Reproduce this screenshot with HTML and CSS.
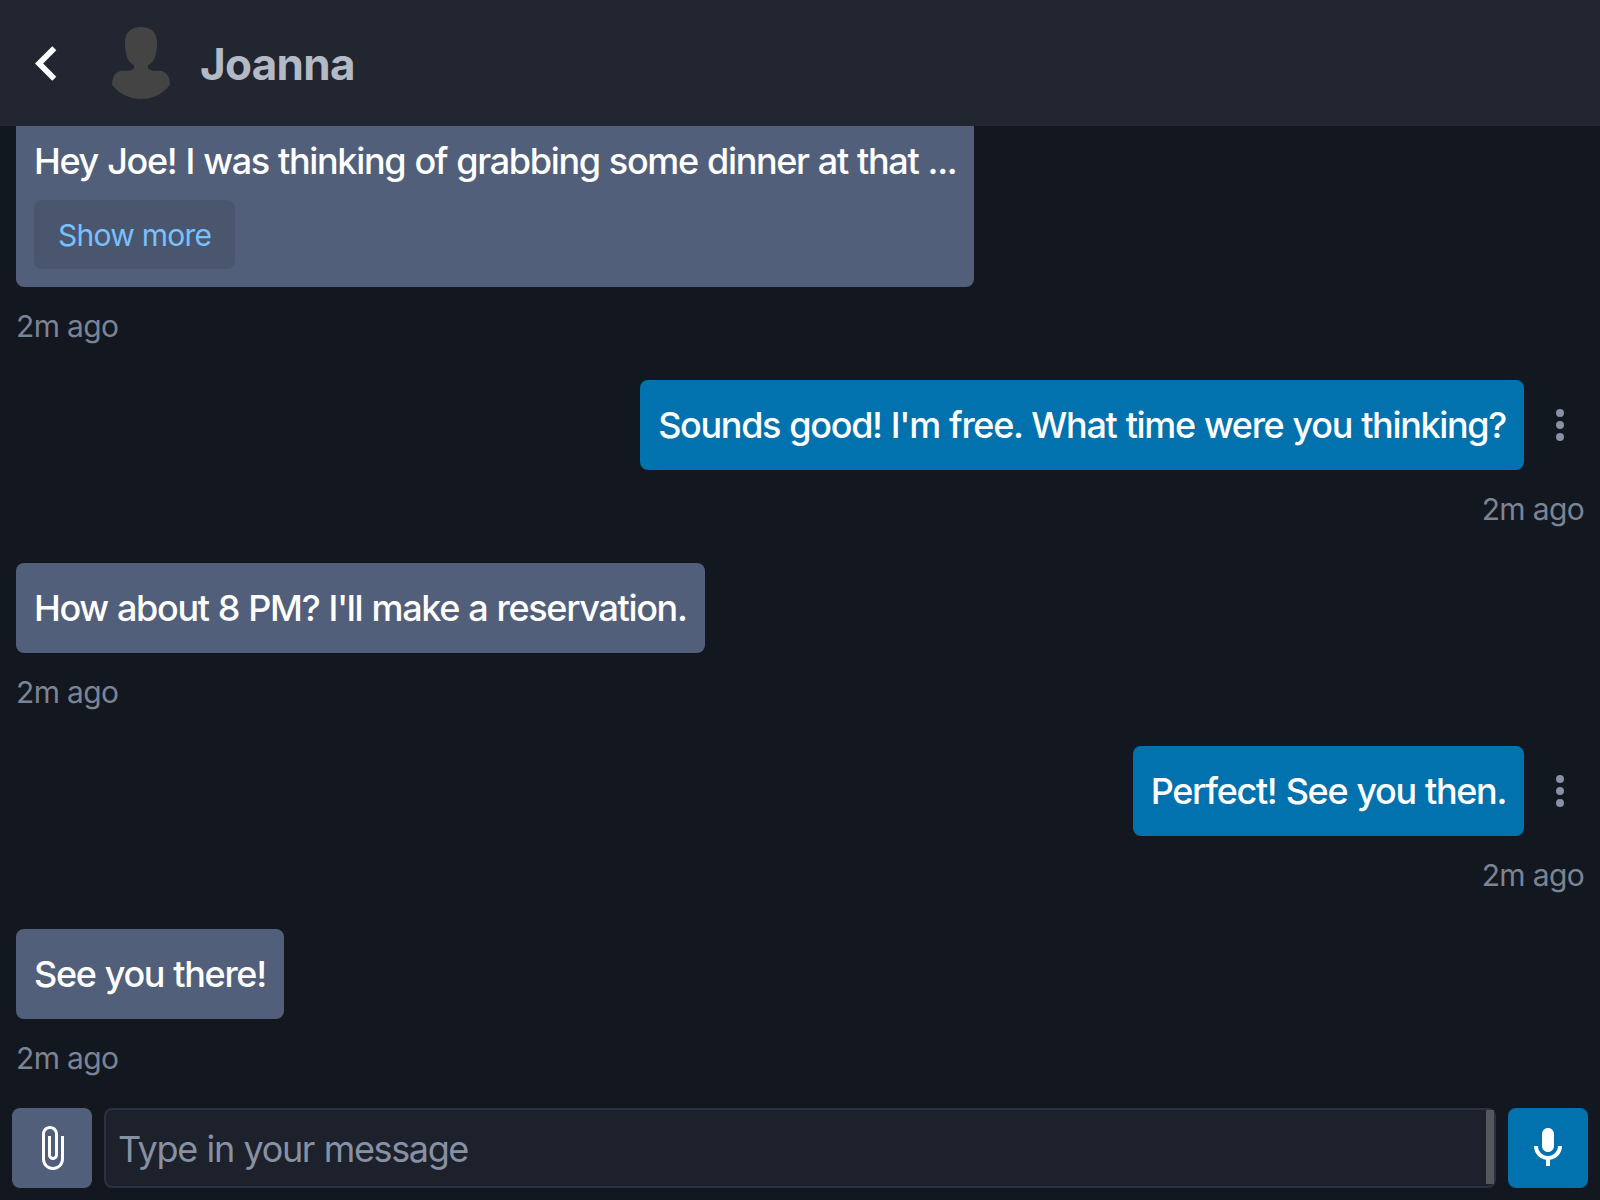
FILE: index.html
```html
<!DOCTYPE html>
<html lang="en">
<head>
  <meta charset="UTF-8" />
  <meta name="viewport" content="width=device-width, initial-scale=1" />
  <title>Joanna</title>
  <link rel="stylesheet" href="styles.css">
</head>
<body>
  <header class="chat-header">
    <a href="#" class="back" aria-label="Back">
      <svg viewBox="0 0 24 24"><path d="M15.41 7.41 14 6l-6 6 6 6 1.41-1.41L10.83 12z"/></svg>
    </a>
    <svg class="avatar" viewBox="336 81 174 216">
      <path d="M423 81C452 81 471 96 471 128C471 165 462 188 444 195C442 206 446 210 462 212L478 212C497 212 509 226 510 254C488 282 455 297 423 297C391 297 358 282 336 254C337 226 349 212 368 212L385 212C400 210 404 206 402 195C384 188 375 165 375 128C375 96 394 81 423 81Z"/>
    </svg>
    <h1>Joanna</h1>
  </header>

  <main class="messages">
    <div class="message">
      <div class="bubble">
        <div class="text">Hey Joe! I was thinking of grabbing some dinner at that ...</div>
        <button class="show-more">Show more</button>
      </div>
      <div class="time">2m ago</div>
    </div>

    <div class="message mine">
      <div class="row">
        <div class="bubble">
          <div class="text">Sounds good! I'm free. What time were you thinking?</div>
        </div>
        <svg class="more" viewBox="0 0 24 24"><circle cx="12" cy="6" r="2"/><circle cx="12" cy="12" r="2"/><circle cx="12" cy="18" r="2"/></svg>
      </div>
      <div class="time">2m ago</div>
    </div>

    <div class="message">
      <div class="bubble">
        <div class="text">How about 8 PM? I'll make a reservation.</div>
      </div>
      <div class="time">2m ago</div>
    </div>

    <div class="message mine">
      <div class="row">
        <div class="bubble">
          <div class="text">Perfect! See you then.</div>
        </div>
        <svg class="more" viewBox="0 0 24 24"><circle cx="12" cy="6" r="2"/><circle cx="12" cy="12" r="2"/><circle cx="12" cy="18" r="2"/></svg>
      </div>
      <div class="time">2m ago</div>
    </div>

    <div class="message">
      <div class="bubble">
        <div class="text">See you there!</div>
      </div>
      <div class="time">2m ago</div>
    </div>
  </main>

  <footer class="composer">
    <button class="icon-btn attach" aria-label="Attach">
      <svg viewBox="0 0 24 24"><path d="M16.5 6v11.5c0 2.21-1.79 4-4 4s-4-1.79-4-4V5c0-1.38 1.12-2.5 2.5-2.5s2.5 1.12 2.5 2.5v10.5c0 .55-.45 1-1 1s-1-.45-1-1V6H10v9.5c0 1.38 1.12 2.5 2.5 2.5s2.5-1.12 2.5-2.5V5c0-2.21-1.79-4-4-4S7 2.79 7 5v12.5c0 3.04 2.46 5.5 5.5 5.5s5.5-2.46 5.5-5.5V6h-1.5z"/></svg>
    </button>
    <div class="field">
      <input type="text" placeholder="Type in your message">
      <span class="scrollbar"></span>
    </div>
    <button class="icon-btn mic" aria-label="Record">
      <svg viewBox="0 0 24 24"><path d="M12 14c1.66 0 3-1.34 3-3V5c0-1.66-1.34-3-3-3S9 3.34 9 5v6c0 1.66 1.34 3 3 3z"/><path d="M17 11c0 2.76-2.24 5-5 5s-5-2.24-5-5H5c0 3.53 2.61 6.43 6 6.92V21h2v-3.08c3.39-.49 6-3.39 6-6.92h-2z"/></svg>
    </button>
  </footer>
</body>
</html>
```
FILE: styles.css
```css
* {
  box-sizing: border-box;
}

body {
  font-family: Inter, sans-serif;
  background: #13171f;
  color: #fff;
  margin: 0;
  height: 100vh;
  display: flex;
  flex-direction: column;
  overflow: hidden;
}

svg {
  display: block;
  fill: currentColor;
}

.chat-header {
  flex: none;
  display: flex;
  align-items: center;
  height: 126px;
  padding: 0 12px;
  background: #212631;
}

.back {
  color: #fff;
}

.back svg {
  width: 69px;
  height: 69px;
}

.avatar {
  width: 58px;
  height: 72px;
  margin: 0 30px 0 31px;
  color: #444;
}

h1 {
  margin: 0;
  padding-top: 2px;
  font-size: 44px;
  line-height: 54px;
  font-weight: 700;
  letter-spacing: -0.7px;
  color: #b3b9c5;
}

.messages {
  flex: 1;
  min-height: 0;
  display: flex;
  flex-direction: column;
  justify-content: flex-end;
  gap: 32px;
  padding: 0 16px 16px;
  overflow: hidden;
}

.message {
  flex: none;
  display: flex;
  flex-direction: column;
  align-items: flex-start;
}

.mine {
  align-items: flex-end;
}

.row {
  display: flex;
  align-items: center;
  gap: 12px;
}

.bubble {
  padding: 18px;
  border-radius: 8px;
  background: #525f7a;
}

.mine .bubble {
  background: #0172ad;
}

.text {
  font-size: 36px;
  font-weight: 450;
  line-height: 54px;
  letter-spacing: -1.33px;
  word-spacing: 0.9px;
  white-space: nowrap;
}

.show-more {
  display: block;
  margin-top: 12px;
  padding: 0 24px;
  height: 69px;
  border: none;
  border-radius: 8px;
  background: #4a566d;
  color: #79c0ff;
  font-family: inherit;
  font-size: 30px;
  letter-spacing: -0.75px;
}

.more {
  width: 48px;
  height: 48px;
  color: #8891a4;
}

.time {
  margin-top: 17px;
  margin-bottom: -1px;
  font-size: 30px;
  line-height: 45px;
  letter-spacing: -0.65px;
  color: #7b8495;
}

.composer {
  flex: none;
  display: flex;
  gap: 12px;
  padding: 12px;
}

.icon-btn {
  display: flex;
  align-items: center;
  justify-content: center;
  width: 80px;
  height: 80px;
  padding: 0;
  border: none;
  border-radius: 8px;
  color: #fff;
}

.icon-btn svg {
  width: 48px;
  height: 48px;
}

.attach {
  background: #525f7a;
}

.mic {
  background: #0172ad;
}

.field {
  position: relative;
  flex: 1;
  display: flex;
  border: 2px solid #2a3140;
  border-radius: 8px;
  background: #1c212c;
}

.field input {
  flex: 1;
  padding: 2px 12px 0;
  border: none;
  outline: none;
  background: none;
  color: #e0e3e7;
  font-family: inherit;
  font-size: 36px;
  letter-spacing: -1.37px;
  word-spacing: 1px;
}

.field input::placeholder {
  color: #8891a4;
}

.scrollbar {
  position: absolute;
  top: 0;
  right: 0;
  width: 8px;
  height: 74px;
  background: #54575b;
}
```
